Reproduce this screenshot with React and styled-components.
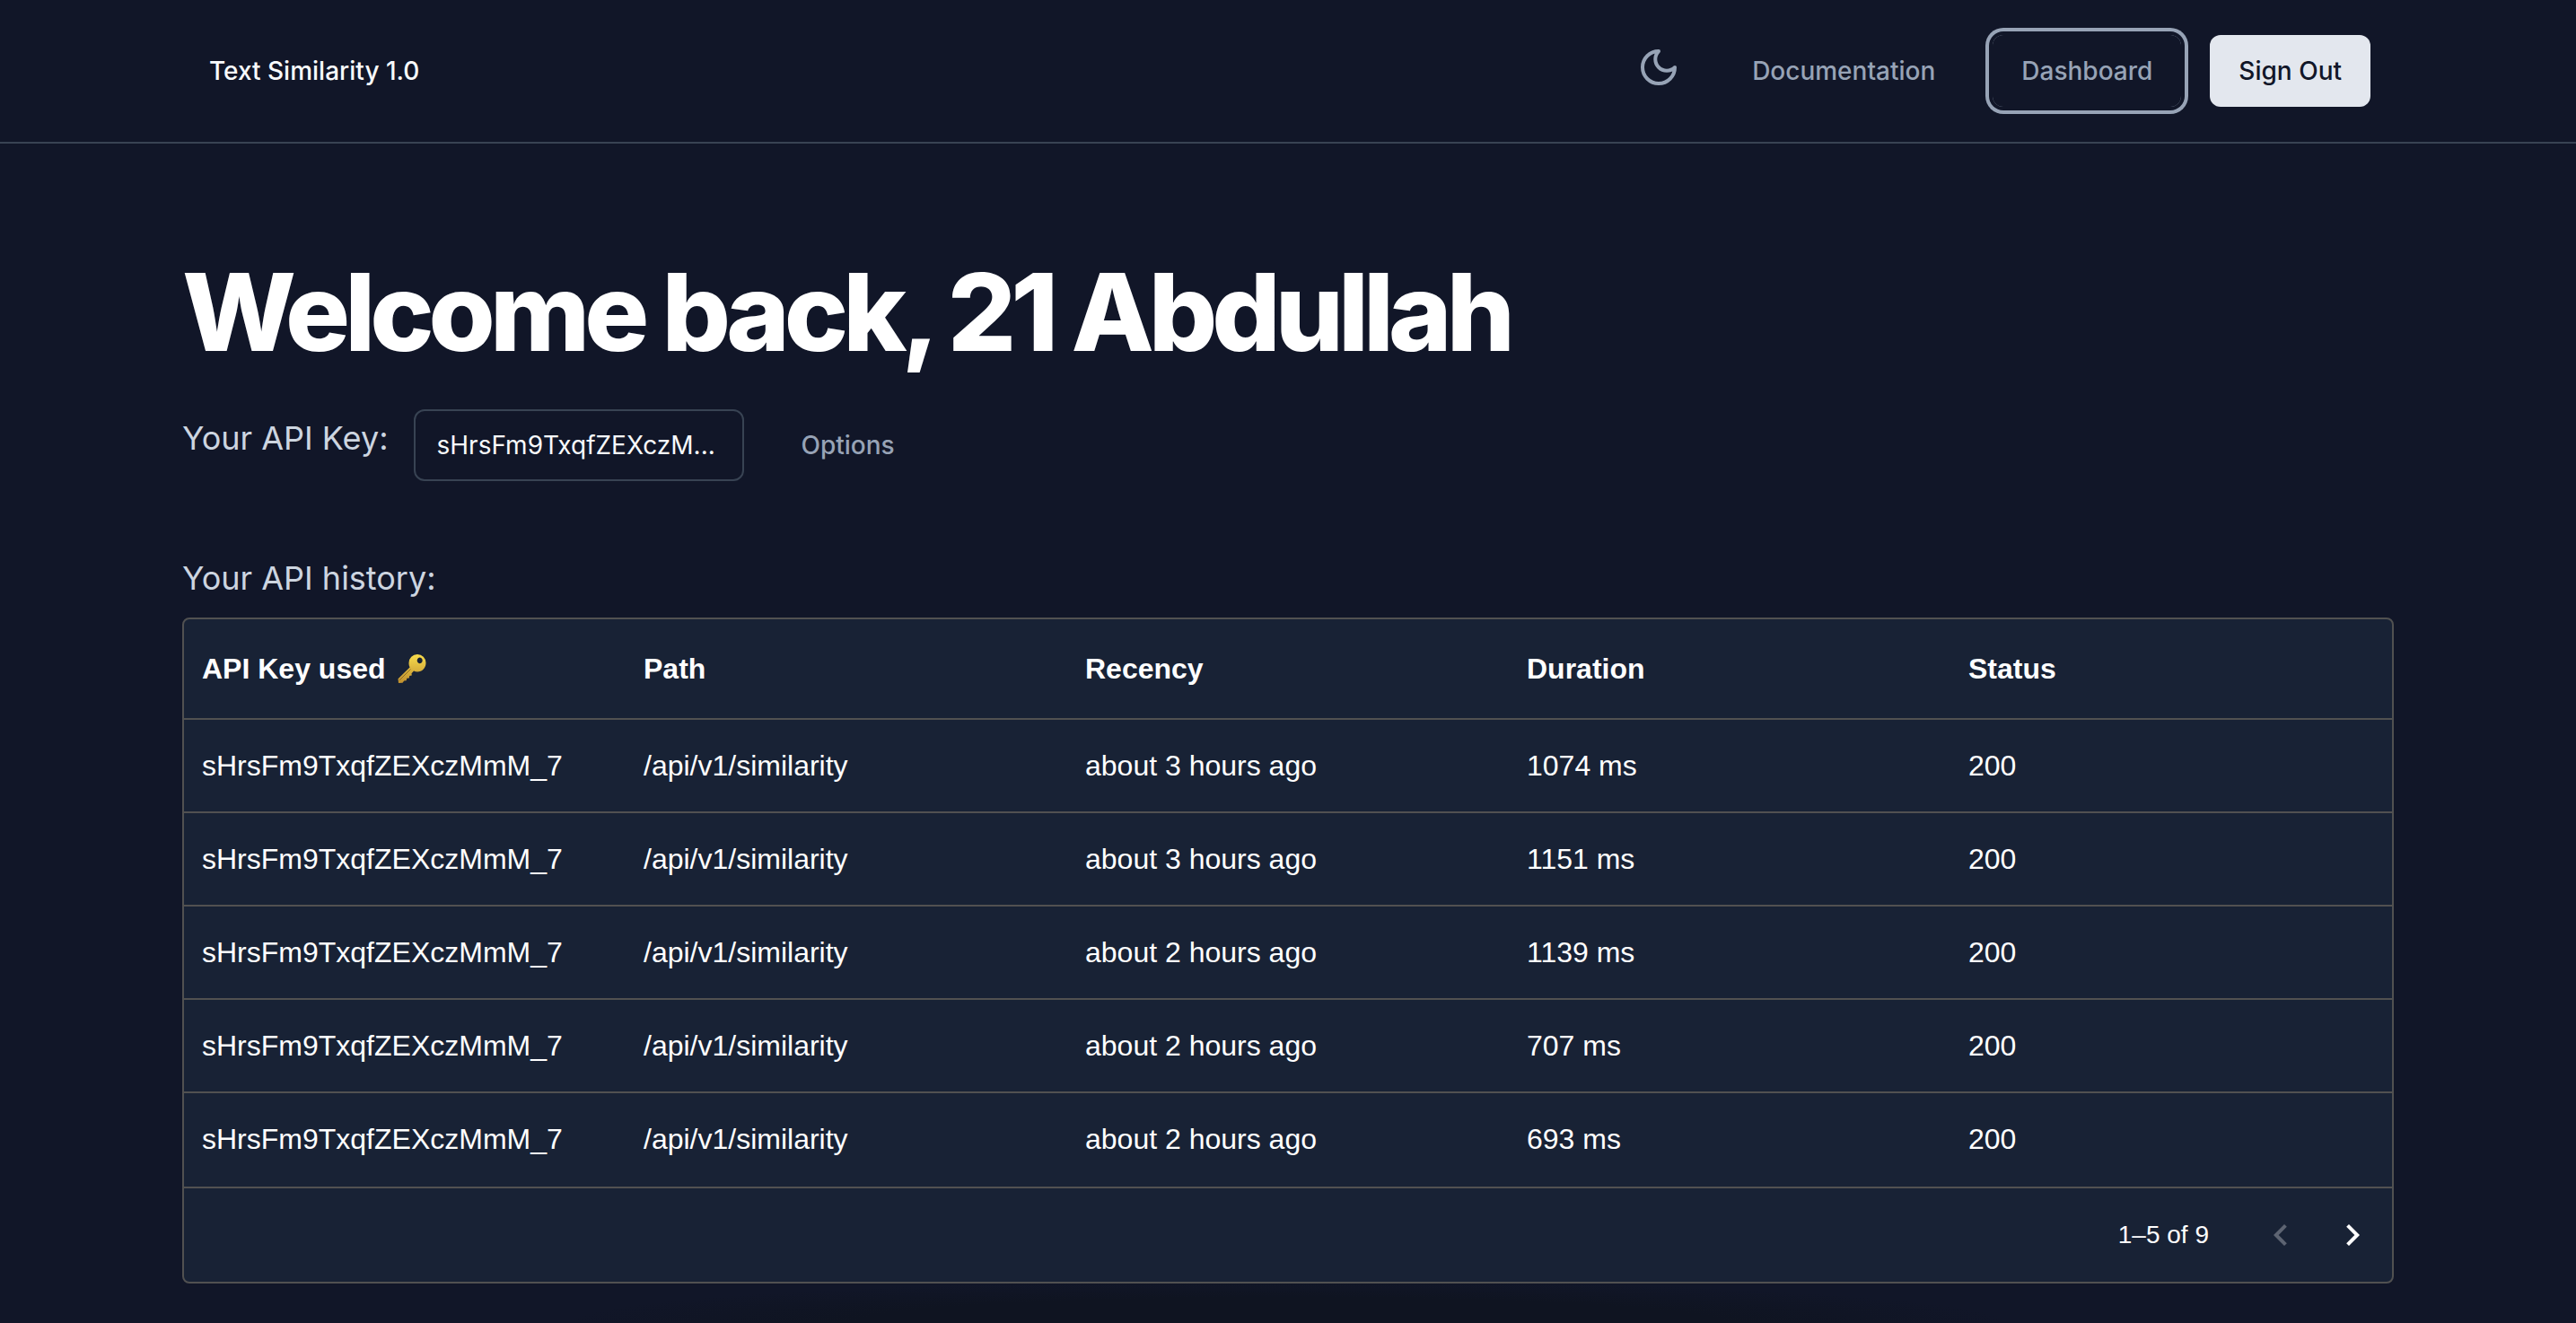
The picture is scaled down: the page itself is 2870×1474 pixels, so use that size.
import React from "react";
import styled, { createGlobalStyle } from "styled-components";

const color = {
  bg: "#111628",
  shade: "#0f1421",
  panel: "#182235",
  grid: "#515151",
  line: "#384353",
  muted: "#97a3b6",
  label: "#cdd5e0",
  light: "#e3e7ee",
  text: "#f8fafc",
};

const sans = '"Inter", "Liberation Sans", sans-serif';
const gridSans = '"Liberation Sans", Arial, sans-serif';

const GlobalStyle = createGlobalStyle`
  *, *::before, *::after { box-sizing: border-box; }
  body {
    margin: 0;
    background: ${color.bg};
    color: ${color.text};
    font-family: ${sans};
  }
`;

const Page = styled.div`
  min-height: 100vh;
  background: radial-gradient(ellipse 28% 48px at 50% 100%, ${color.shade} 60%, transparent) ${color.bg};
`;

const Header = styled.header`
  border-bottom: 2px solid ${color.line};
`;

const HeaderInner = styled.div`
  display: flex;
  align-items: center;
  justify-content: space-between;
  max-width: 2472px;
  margin: 0 auto;
  padding: 39px 30px 39px 34px;
`;

const Brand = styled.a`
  color: ${color.text};
  font-size: 28px;
  font-weight: 500;
  line-height: 40px;
  text-decoration: none;
`;

const Nav = styled.nav`
  display: flex;
  align-items: center;
  gap: 32px;
`;

const buttonLook = `
  display: inline-flex;
  align-items: center;
  justify-content: center;
  height: 80px;
  border: 0;
  border-radius: 12px;
  background: transparent;
  font-family: ${sans};
  font-size: 28px;
  font-weight: 500;
  line-height: 40px;
  text-decoration: none;
  cursor: pointer;
`;

const NavLink = styled.a`
  ${buttonLook}
  padding: 0 32px;
  color: ${color.muted};
  box-shadow: ${(p) =>
    p.$focused ? `0 0 0 4px ${color.bg}, 0 0 0 8px ${color.muted}` : "none"};
`;

const Button = styled.button`
  ${buttonLook}
  padding: 0 32px;
  color: ${(p) => (p.$solid ? color.bg : color.muted)};
  background: ${(p) => (p.$solid ? color.light : "transparent")};
`;

const IconButton = styled.button`
  ${buttonLook}
  padding: 0 16px 8px;
  color: ${color.muted};
`;

const Main = styled.main`
  max-width: 2560px;
  margin: 0 auto;
  padding: 128px 48px 40px;
`;

const Title = styled.h1`
  margin: 0;
  color: #ffffff;
  font-size: 120px;
  font-weight: 800;
  letter-spacing: -0.05em;
  line-height: 120px;
`;

const KeyRow = styled.div`
  display: flex;
  align-items: flex-start;
  gap: 32px;
  margin-top: 48px;
`;

const KeyField = styled.div`
  display: flex;
  align-items: flex-start;
  gap: 28px;
`;

const Label = styled.label`
  padding-top: 8px;
  color: ${color.label};
  font-size: 36px;
  font-weight: 400;
  line-height: 48px;
`;

const KeyInput = styled.input`
  width: 368px;
  height: 80px;
  padding: 0 24px;
  border: 2px solid ${color.line};
  border-radius: 12px;
  background: transparent;
  color: ${color.text};
  font-family: ${sans};
  font-size: 28px;
`;

const SectionLabel = styled.p`
  margin: 84px 0 20px;
  color: ${color.label};
  font-size: 36px;
  font-weight: 400;
  line-height: 48px;
`;

const Panel = styled.section`
  border: 2px solid ${color.grid};
  border-radius: 8px;
  background: ${color.panel};
  color: #ffffff;
  font-family: ${gridSans};
  overflow: hidden;
`;

const Table = styled.table`
  width: 100%;
  border-collapse: separate;
  border-spacing: 0;
  table-layout: fixed;
  font-size: 32px;
  text-align: left;
`;

const HeadCell = styled.th`
  height: 112px;
  padding: 0 20px;
  border-bottom: 2px solid ${color.grid};
  font-weight: 700;
`;

const Cell = styled.td`
  height: 104px;
  padding: 0 20px;
  border-bottom: 2px solid ${color.grid};
  tr:last-child > & { border-bottom-color: transparent; }
`;

const HeadLabel = styled.span`
  display: inline-flex;
  align-items: center;
  gap: 12px;
`;

const Pager = styled.footer`
  display: flex;
  align-items: center;
  justify-content: flex-end;
  height: 106px;
  padding-right: 4px;
  border-top: 2px solid ${color.grid};
  font-size: 28px;
`;

const PagerRange = styled.p`
  margin: 0 40px 0 0;
`;

const PagerButton = styled.button`
  display: inline-flex;
  padding: 16px;
  border: 0;
  background: transparent;
  color: #ffffff;
  cursor: pointer;
  &:disabled { color: #5d6472; cursor: default; }
`;

const MoonIcon = () => (
  <svg width="48" height="48" viewBox="0 0 24 24" fill="none" stroke="currentColor" strokeWidth="2" strokeLinecap="round" strokeLinejoin="round" aria-hidden="true">
    <path d="M12 3a6 6 0 0 0 9 9 9 9 0 1 1-9-9Z" />
  </svg>
);

const KeyIcon = () => (
  <svg width="34" height="34" viewBox="0 0 34 34" aria-hidden="true">
    <defs>
      <linearGradient id="gold" x1="0" y1="0" x2="0" y2="1">
        <stop offset="0" stopColor="#f7dc4c" />
        <stop offset="1" stopColor="#c0902f" />
      </linearGradient>
    </defs>
    <path fill="url(#gold)" fillRule="evenodd" d="M23 1a9.5 9.5 0 0 1 9.500 9.500c0 6-4.500 10-9.500 10-1.500 0-2.800-.3-4-.9l-2.500 2.600.3 2.300-2.600.5-.4 2.500-2.500.2-.6 2.500-2.500.3-1.700 2.200L2 33l-.5-4.800L14.600 15.500c-.8-1.500-1.100-3-1.100-5A9.500 9.500 0 0 1 23 1Zm2.700 3.600a3 3.300 0 1 0 .01 0Z" />
    <path d="M3 30 15.500 17.500" stroke="#8f6a22" strokeWidth="1" />
  </svg>
);

const ChevronIcon = ({ d }) => (
  <svg width="48" height="48" viewBox="0 0 24 24" fill="currentColor" aria-hidden="true">
    <path d={d} />
  </svg>
);

const columns = ["API Key used", "Path", "Recency", "Duration", "Status"];

const requests = [
  { recency: "about 3 hours ago", duration: "1074 ms" },
  { recency: "about 3 hours ago", duration: "1151 ms" },
  { recency: "about 2 hours ago", duration: "1139 ms" },
  { recency: "about 2 hours ago", duration: "707 ms" },
  { recency: "about 2 hours ago", duration: "693 ms" },
];

export default function App() {
  return (
    <Page>
      <GlobalStyle />
      <Header>
        <HeaderInner>
          <Brand href="#">Text Similarity 1.0</Brand>
          <Nav>
            <IconButton type="button" aria-label="Toggle theme">
              <MoonIcon />
            </IconButton>
            <NavLink href="#documentation">Documentation</NavLink>
            <NavLink href="#dashboard" $focused>Dashboard</NavLink>
            <Button type="button" $solid>Sign Out</Button>
          </Nav>
        </HeaderInner>
      </Header>
      <Main>
        <Title>Welcome back, 21 Abdullah</Title>
        <KeyRow>
          <KeyField>
            <Label htmlFor="api-key">Your API Key:</Label>
            <KeyInput id="api-key" readOnly value="sHrsFm9TxqfZEXczM..." />
          </KeyField>
          <Button type="button">Options</Button>
        </KeyRow>
        <SectionLabel id="history">Your API history:</SectionLabel>
        <Panel aria-labelledby="history">
          <Table>
            <thead>
              <tr>
                {columns.map((name, i) => (
                  <HeadCell key={name} scope="col">
                    <HeadLabel>
                      {name}
                      {i === 0 && <KeyIcon />}
                    </HeadLabel>
                  </HeadCell>
                ))}
              </tr>
            </thead>
            <tbody>
              {requests.map((r) => (
                <tr key={r.duration}>
                  <Cell>sHrsFm9TxqfZEXczMmM_7</Cell>
                  <Cell>/api/v1/similarity</Cell>
                  <Cell>{r.recency}</Cell>
                  <Cell>{r.duration}</Cell>
                  <Cell>200</Cell>
                </tr>
              ))}
            </tbody>
          </Table>
          <Pager>
            <PagerRange>1–5 of 9</PagerRange>
            <PagerButton type="button" aria-label="Previous page" disabled>
              <ChevronIcon d="M15.410 16.590 10.830 12l4.580-4.590L14 6l-6 6 6 6z" />
            </PagerButton>
            <PagerButton type="button" aria-label="Next page">
              <ChevronIcon d="M8.590 16.590 13.170 12 8.590 7.410 10 6l6 6-6 6z" />
            </PagerButton>
          </Pager>
        </Panel>
      </Main>
    </Page>
  );
}
